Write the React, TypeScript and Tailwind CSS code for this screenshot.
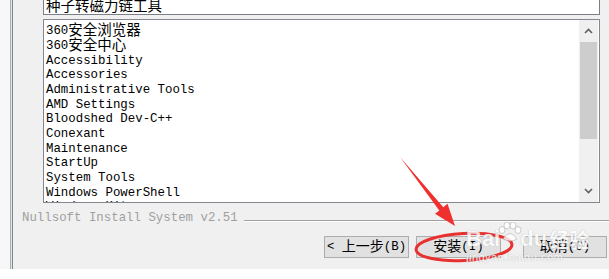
import React from 'react';

const ITEMS = [
  '360安全浏览器',
  '360安全中心',
  'Accessibility',
  'Accessories',
  'Administrative Tools',
  'AMD Settings',
  'Bloodshed Dev-C++',
  'Conexant',
  'Maintenance',
  'StartUp',
  'System Tools',
  'Windows PowerShell',
  'Windows Kits',
];

const CJK_RE = /[\u3000-\u9fff\uff00-\uffef]/;

// ASCII runs in a mono font, CJK runs a bit bigger (SimSun-like half/full width).
// Each run is its own flex item so the parent can centre them on one line.
function Mixed({ text, cjk = 'text-[14.5px]' }: { text: string; cjk?: string }) {
  const parts = text.split(/([\u3000-\u9fff\uff00-\uffef]+)/).filter(Boolean);
  return (
    <>
      {parts.map((p, i) =>
        CJK_RE.test(p) ? (
          <span key={i} className={`${cjk} relative -top-[2px] leading-none font-['Noto_Sans_CJK_SC',sans-serif]`}>
            {p}
          </span>
        ) : (
          <span key={i} className="leading-none whitespace-pre">{p}</span>
        )
      )}
    </>
  );
}

function Btn({ label, w }: { label: string; w: string }) {
  return (
    <div
      className={`${w} h-[22px] flex items-center justify-center bg-[#e1e1e1] border border-[#adadad] text-[12.4px] text-black`}
    >
      <Mixed text={label} cjk="text-[14px]" />
    </div>
  );
}

export default function App() {
  return (
    <div className="w-[609px] h-[279px] bg-white overflow-hidden relative font-['Liberation_Mono',monospace]">
      <div className="flex h-[269px]">
        <div className="w-[10px] bg-[#f7f7f7]" />
        <div className="w-[1px] bg-[#9fb2b6]" />
        <div className="w-[1px] bg-[#e2e7e7]" />
        <div className="w-[1px] bg-[#7f8589]" />

        <div className="flex-1 bg-[#f0f0f0] flex flex-col">
          <div className="ml-[30px] mr-[9px] flex flex-col">
            {/* text field, top cut off */}
            <div className="h-[15px] bg-white border-x border-b border-[#7a7e86] overflow-hidden">
              <div className="pl-[2px] -mt-[3px] text-[14.5px] leading-[16px] text-black font-['Noto_Sans_CJK_SC',sans-serif]">
                种子转磁力链工具
              </div>
            </div>

            {/* list box */}
            <div className="mt-[4px] h-[184px] bg-white border border-[#828790] flex overflow-hidden">
              <div className="flex-1 pl-[2px] pt-[4px] text-[12.4px] text-black overflow-hidden">
                {ITEMS.map((it) => (
                  <div key={it} className="h-[14.7px] flex items-center whitespace-nowrap">
                    <Mixed text={it} />
                  </div>
                ))}
              </div>
              <div className="w-[19px] mr-[1px] bg-[#f0f0f0] flex flex-col">
                <div className="h-[22px] flex items-center justify-center">
                  <svg width="9" height="6" viewBox="0 0 9 6">
                    <path d="M1 5 L4.5 1.5 L8 5" fill="none" stroke="#606060" strokeWidth="1.6" />
                  </svg>
                </div>
                <div className="h-[97px] mx-[1px] bg-[#cdcdcd]" />
                <div className="flex-1" />
                <div className="h-[22px] flex items-center justify-center">
                  <svg width="9" height="6" viewBox="0 0 9 6">
                    <path d="M1 1 L4.5 4.5 L8 1" fill="none" stroke="#606060" strokeWidth="1.6" />
                  </svg>
                </div>
              </div>
            </div>
          </div>

          {/* branding line */}
          <div className="mt-[8px] h-[14px] flex items-center">
            <span className="pl-[9px] text-[12.4px] leading-[14px] text-[#a0a0a0] whitespace-pre">
              Nullsoft Install System v2.51
            </span>
            <div className="flex-1 ml-[6px] mt-[5px] h-[2px] border-t border-[#a0a0a0] border-b border-b-white" />
          </div>

          {/* buttons */}
          <div className="mt-[11px] flex justify-end pr-[2px]">
            <Btn label="< 上一步(B)" w="w-[85px]" />
            <div className="w-[7px]" />
            <Btn label="安装(I)" w="w-[85px]" />
            <div className="w-[22px]" />
            <Btn label="取消(C)" w="w-[84px]" />
          </div>
        </div>
      </div>

      {/* annotation: red arrow + ellipse */}
      <svg className="absolute left-0 top-0 pointer-events-none" width="609" height="279" viewBox="0 0 609 279">
        <polygon
          points="400,157 443.3,207.2 447.5,203.8 455,226 435,213.8 439.3,210.4"
          fill="#f0302e"
        />
        <ellipse
          cx="464"
          cy="247"
          rx="48"
          ry="13.5"
          transform="rotate(-3 464 247)"
          fill="none"
          stroke="#e8302f"
          strokeWidth="3"
        />
      </svg>

      {/* watermark */}
      <div className="absolute left-[466px] top-[222px] pointer-events-none opacity-80 text-white [text-shadow:0_0_1px_#9a9a9a]">
        <div className="flex items-end leading-none font-['Liberation_Sans',sans-serif] font-bold">
          <span className="text-[22px]">Bai</span>
          <svg width="26" height="20" viewBox="0 0 26 20" className="-mx-[3px] mb-[8px]">
            <g fill="white" stroke="#b5b5b5" strokeWidth="0.8">
              <ellipse cx="5" cy="8" rx="3" ry="3.5" />
              <ellipse cx="10" cy="3.5" rx="3" ry="3.5" />
              <ellipse cx="16" cy="3.5" rx="3" ry="3.5" />
              <ellipse cx="21" cy="8" rx="3" ry="3.5" />
              <path d="M6 17 Q13 6 20 17 Q13 21 6 17 Z" />
            </g>
          </svg>
          <span className="text-[22px]">du</span>
          <span className="ml-[2px] text-[20px] font-['Noto_Sans_CJK_SC',sans-serif]">经验</span>
        </div>
        <div className="mt-[2px] text-[11px] leading-none tracking-[0.5px] font-['Liberation_Sans',sans-serif]">
          jingyan.baidu.com
        </div>
      </div>
    </div>
  );
}
